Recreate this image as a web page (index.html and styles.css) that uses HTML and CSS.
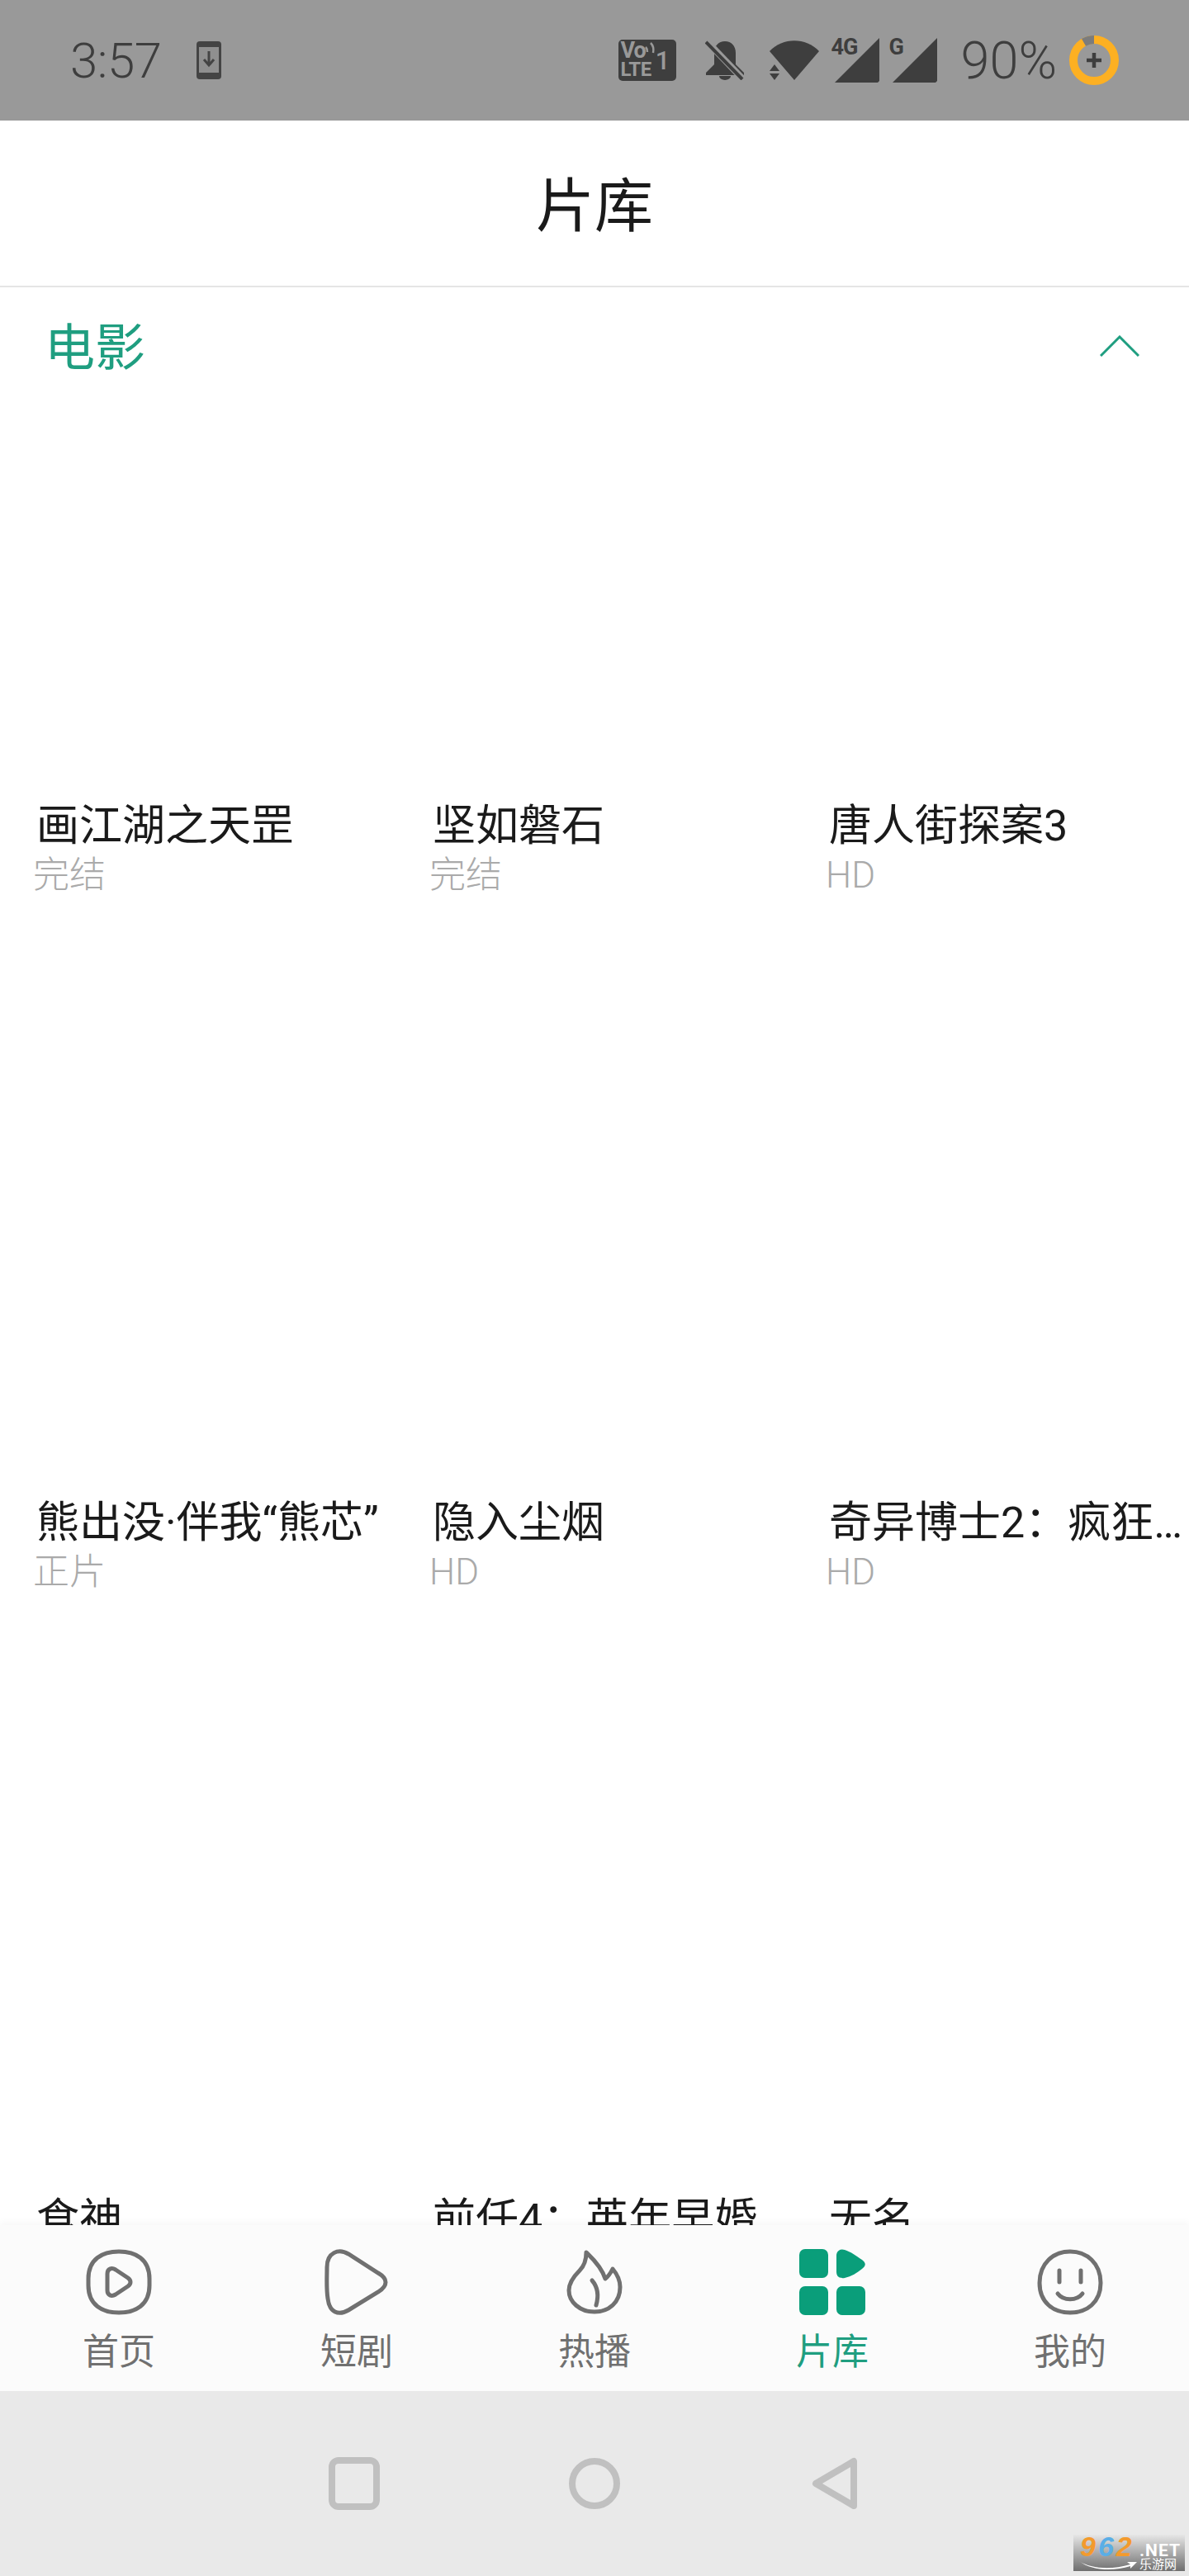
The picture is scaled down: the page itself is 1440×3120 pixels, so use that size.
FILE: index.html
```html
<!DOCTYPE html>
<html lang="zh-CN">
<head>
<meta charset="UTF-8">
<meta name="viewport" content="width=device-width, initial-scale=1.0">
<title>片库</title>
<link rel="stylesheet" href="styles.css">
</head>
<body>
    <div class="screen">
        <div class="statusbar">
            <div class="status-left">
                <span class="clock">3:57</span>
                <svg class="ico-phone" viewBox="0 0 30 46"><rect width="30" height="46" rx="4" fill="#444"/><rect x="3" y="7" width="24" height="31" fill="#8f8f8f"/><path d="M15 12v16M9 22l6 7 6-7" fill="none" stroke="#444" stroke-width="3"/></svg>
            </div>
            <div class="status-right">
                <div class="volte">
                    <div class="volte-text"><span class="vo">Vo</span><span class="lte">LTE</span></div>
                    <span class="volte-sim">1</span>
                    <svg class="volte-waves" viewBox="0 0 14 16"><path d="M1 6c2 2 2 4 2 6M7 1c3 3 4 7 3 12" fill="none" stroke="#999" stroke-width="2.500"/></svg>
                </div>
                <svg class="ico-bell" viewBox="0 0 48 48"><path d="M24 1c-8 0-13 6-13 14v14L1 39v3h46v-3L37 29V15C37 7 32 1 24 1z" fill="#3e3e3e"/><path d="M17 43a7 5 0 0 0 14 0z" fill="#3e3e3e"/><path d="M2 1l44 46" stroke="#999" stroke-width="8"/><path d="M1 2l44 45" stroke="#3e3e3e" stroke-width="4"/></svg>
                <svg class="ico-wifi" viewBox="0 0 60 48"><path d="M0 13C16-4 44-4 60 13L30 48z" fill="#3e3e3e"/><path d="M6 29l-6 8h12zM0 40l6 8 6-8z" fill="#3e3e3e"/></svg>
                <div class="signal">
                    <span class="signal-tag">4G</span>
                    <svg viewBox="0 0 54 54"><path d="M54 0v52l-2 2H0z" fill="#3e3e3e"/></svg>
                </div>
                <div class="signal">
                    <span class="signal-tag">G</span>
                    <svg viewBox="0 0 54 54"><path d="M54 0v52l-2 2H0z" fill="#3e3e3e"/></svg>
                </div>
                <span class="battery-pct">90%</span>
                <svg class="ico-battery" viewBox="0 0 60 60"><circle cx="30" cy="30" r="25" fill="none" stroke="#fdb022" stroke-width="10"/><path d="M30 5A25 25 0 0 0 17.500 8.350" fill="none" stroke="#7c7c7c" stroke-width="10"/><path d="M30 21v18M21 30h18" stroke="#3e3e3e" stroke-width="4.500"/></svg>
            </div>
        </div>

        <div class="topbar">片库</div>

        <div class="section-head">
            <span class="section-name">电影</span>
            <svg class="chevron" viewBox="0 0 48 26"><path d="M1 25L24 2l23 23" fill="none" stroke="#1f9e80" stroke-width="3"/></svg>
        </div>

        <div class="list">
            <div class="movie"><div class="poster"></div><div class="movie-title">画江湖之天罡</div><div class="movie-tag">完结</div></div>
            <div class="movie"><div class="poster"></div><div class="movie-title">坚如磐石</div><div class="movie-tag">完结</div></div>
            <div class="movie"><div class="poster"></div><div class="movie-title">唐人街探案3</div><div class="movie-tag">HD</div></div>
            <div class="movie"><div class="poster"></div><div class="movie-title">熊出没·伴我“熊芯”</div><div class="movie-tag">正片</div></div>
            <div class="movie"><div class="poster"></div><div class="movie-title">隐入尘烟</div><div class="movie-tag">HD</div></div>
            <div class="movie"><div class="poster"></div><div class="movie-title">奇异博士2：疯狂的多元宇宙</div><div class="movie-tag">HD</div></div>
            <div class="movie"><div class="poster"></div><div class="movie-title">食神</div><div class="movie-tag">HD</div></div>
            <div class="movie"><div class="poster"></div><div class="movie-title">前任4：英年早婚</div><div class="movie-tag">HD</div></div>
            <div class="movie"><div class="poster"></div><div class="movie-title">无名</div><div class="movie-tag">HD</div></div>
        </div>

        <div class="tabbar">
            <div class="tab">
                <svg viewBox="0 0 80 80"><path d="M40 3c20 0 37 9 37 33v8c0 24-17 33-37 33S3 68 3 44v-8C3 12 20 3 40 3z" fill="none" stroke="#707070" stroke-width="5"/><path d="M26 30c0-6 5-8 10-5l15 10c4 3 4 7 0 10L36 55c-5 3-10 1-10-5z" fill="none" stroke="#707070" stroke-width="5"/></svg>
                <span>首页</span>
            </div>
            <div class="tab">
                <svg viewBox="0 0 80 80"><path d="M4 22C4 4 18-1 30 6l36 23c12 7 12 15 0 23L30 74C18 81 7 77 5 60 3 48 4 34 4 22z" fill="none" stroke="#707070" stroke-width="5"/></svg>
                <span>短剧</span>
            </div>
            <div class="tab">
                <svg viewBox="0 0 80 80"><path d="M30 4C34 8 48 20 53 36 57 33 60 28 62 24 67 30 71 38 71 46 71 64 58 76 40 76 22 76 9 64 9 50 9 40 16 32 22 26 27 21 30 14 30 4z" fill="none" stroke="#707070" stroke-width="5" stroke-linejoin="round"/><path d="M37 38C43 45 46 54 42 68" fill="none" stroke="#707070" stroke-width="5" stroke-linecap="round"/></svg>
                <span>热播</span>
            </div>
            <div class="tab active">
                <svg viewBox="0 0 80 80"><rect x="0" y="0" width="35" height="35" rx="7" fill="#0a9e7a"/><path d="M45 8c0-6 5-9 10-7 7 2 15 8 21 12 5 4 5 7 0 11-6 5-13 9-21 11-5 1-10-1-10-7z" fill="#0a9e7a"/><rect x="0" y="45" width="35" height="35" rx="7" fill="#0a9e7a"/><rect x="45" y="45" width="35" height="35" rx="7" fill="#0a9e7a"/></svg>
                <span>片库</span>
            </div>
            <div class="tab">
                <svg viewBox="0 0 80 80"><path d="M40 3c20 0 37 14 37 38S60 77 40 77 3 65 3 41 20 3 40 3z" fill="none" stroke="#707070" stroke-width="5"/><path d="M27 26v14M53 26v14" stroke="#707070" stroke-width="5" stroke-linecap="round"/><path d="M25 54c7 9 23 9 30 0" fill="none" stroke="#707070" stroke-width="5" stroke-linecap="round"/></svg>
                <span>我的</span>
            </div>
        </div>

        <div class="navbar">
            <div class="nav-keys">
                <svg viewBox="0 0 62 64"><rect x="4" y="4" width="54" height="56" rx="8" fill="none" stroke="#c0c0c0" stroke-width="8"/></svg>
                <svg viewBox="0 0 62 64"><circle cx="31" cy="32" r="27" fill="none" stroke="#c0c0c0" stroke-width="8"/></svg>
                <svg viewBox="0 0 62 64"><path d="M54 5v54L8 32z" fill="none" stroke="#c0c0c0" stroke-width="8" stroke-linejoin="round"/></svg>
            </div>
            <div class="watermark">
                <div class="wm-top"><span class="wm-num"><i>9</i><b>6</b><i>2</i></span><span class="wm-net">.NET</span></div>
                <div class="wm-cn">乐游网</div>
                <svg class="wm-swoosh" viewBox="0 0 70 12"><path d="M0 1c14 9 38 11 62 4l-4-3 12 0-8 8 0-3C40 14 14 12 0 1z" fill="#fff"/></svg>
            </div>
        </div>
    </div>
</body>
</html>
```

FILE: styles.css
```css
* {
    box-sizing: border-box;
}

body {
    margin: 0;
    background-color: #fff;
    font-family: Roboto, "Noto Sans CJK SC", sans-serif;
}

.screen {
    display: flex;
    flex-direction: column;
    width: 1440px;
    height: 3120px;
    overflow: hidden;
}

/* status bar */
.statusbar {
    display: flex;
    justify-content: space-between;
    align-items: center;
    flex: none;
    height: 146px;
    padding: 0 85px;
    background-color: #999;
    color: #3e3e3e;
}

.status-left {
    display: flex;
    align-items: center;
    gap: 43px;
}

.clock {
    font-size: 60px;
    font-weight: 300;
    letter-spacing: -0.5px;
}

.ico-phone {
    width: 30px;
    height: 46px;
}

.status-right {
    display: flex;
    align-items: center;
}

.volte {
    position: relative;
    display: flex;
    align-items: center;
    width: 70px;
    height: 50px;
    padding: 0 3px;
    border-radius: 5px;
    background-color: #3e3e3e;
    color: #999;
    font-weight: 700;
}

.volte-text {
    display: flex;
    flex-direction: column;
    line-height: 23px;
}

.vo {
    font-size: 27px;
    letter-spacing: -1px;
}

.lte {
    font-size: 24px;
    letter-spacing: -0.5px;
}

.volte-sim {
    margin-left: 5px;
    font-size: 31px;
    font-weight: 500;
}

.volte-waves {
    position: absolute;
    top: 3px;
    left: 32px;
    width: 14px;
    height: 16px;
}

.ico-bell {
    width: 48px;
    height: 48px;
    margin-left: 35px;
}

.ico-wifi {
    width: 60px;
    height: 48px;
    margin-left: 30px;
}

.signal {
    position: relative;
    width: 54px;
    height: 54px;
}

.signal svg {
    display: block;
    width: 54px;
    height: 54px;
}

.signal-tag {
    position: absolute;
    top: -3px;
    left: -4px;
    font-size: 27px;
    font-weight: 700;
    letter-spacing: -1px;
    line-height: 28px;
}

.ico-wifi + .signal {
    margin-left: 19px;
}

.signal + .signal {
    margin-left: 16px;
}

.battery-pct {
    margin-left: 29px;
    font-size: 63px;
    font-weight: 300;
}

.ico-battery {
    width: 60px;
    height: 60px;
    margin-left: 15px;
}

/* title */
.topbar {
    display: flex;
    justify-content: center;
    align-items: center;
    flex: none;
    height: 202px;
    padding-bottom: 6px;
    border-bottom: 2px solid #e5e5e5;
    font-size: 71px;
    font-weight: 400;
    color: #1a1a1a;
}

.section-head {
    display: flex;
    justify-content: space-between;
    align-items: center;
    flex: none;
    height: 144px;
    padding: 0 60px 7px 54px;
}

.section-name {
    font-size: 61px;
    font-weight: 400;
    color: #1f9e80;
}

.chevron {
    width: 48px;
    height: 26px;
    margin-top: 4px;
}

/* movie grid */
.list {
    display: grid;
    grid-template-columns: repeat(3, minmax(0, 1fr));
    grid-auto-rows: 844px;
    flex: 1;
    min-height: 0;
    overflow: hidden;
    background-color: #fff;
}

.poster {
    height: 473px;
}

.movie-title {
    overflow: hidden;
    padding-left: 44px;
    font-size: 52px;
    font-weight: 400;
    line-height: 72px;
    color: #1a1a1a;
    white-space: nowrap;
    text-overflow: ellipsis;
}

.movie-tag {
    padding-left: 40px;
    font-size: 44px;
    font-weight: 300;
    line-height: 46px;
    color: #aaa;
}

/* bottom tabs */
.tabbar {
    display: grid;
    grid-template-columns: repeat(5, 1fr);
    flex: none;
    height: 201px;
    padding-top: 29px;
    background-color: #fbfbfb;
    box-shadow: 0 -4px 8px rgba(0, 0, 0, 0.03);
}

.tab {
    display: flex;
    flex-direction: column;
    align-items: center;
    gap: 14px;
    font-size: 44px;
    font-weight: 400;
    line-height: 62px;
    color: #707070;
}

.tab svg {
    width: 80px;
    height: 80px;
}

.tab.active {
    color: #1f9e80;
}

/* system nav */
.navbar {
    position: relative;
    flex: none;
    height: 224px;
    padding-top: 80px;
    background-color: #e9e9e9;
}

.nav-keys {
    display: flex;
    justify-content: center;
    gap: 229px;
}

.nav-keys svg {
    width: 62px;
    height: 64px;
}

.watermark {
    position: absolute;
    right: 5px;
    bottom: 6px;
    overflow: hidden;
    width: 135px;
    height: 44px;
    padding: 1px 0 0 8px;
    background: linear-gradient(#e6e6e6, #6f6f6f);
    color: #fff;
}

.wm-top {
    display: flex;
    align-items: baseline;
    line-height: 26px;
}

.wm-num {
    width: 72px;
    font-family: "Liberation Sans", sans-serif;
    font-size: 34px;
    font-style: italic;
    font-weight: 700;
    letter-spacing: 3px;
}

.wm-num i {
    color: #f39a2d;
}

.wm-num b {
    color: #5aaee6;
}

.wm-net {
    font-size: 21px;
    font-weight: 700;
    letter-spacing: 1px;
    line-height: 20px;
}

.wm-cn {
    padding-left: 72px;
    font-size: 15px;
    line-height: 15px;
}

.wm-swoosh {
    position: absolute;
    left: 7px;
    bottom: 1px;
    width: 70px;
    height: 12px;
}
```
